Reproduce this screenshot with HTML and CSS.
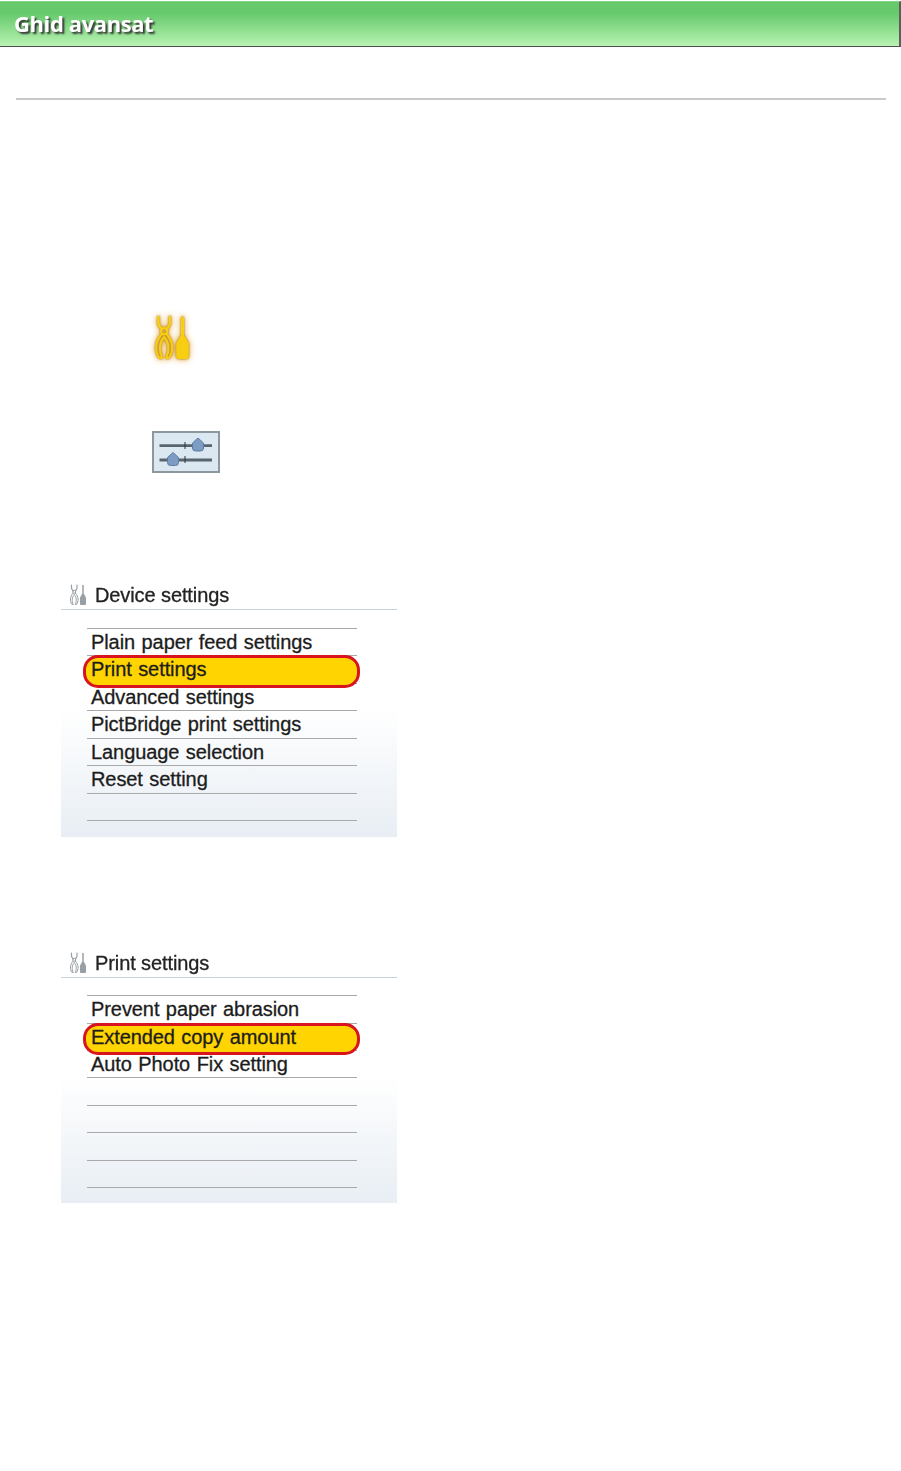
FILE: index.html
```html
<!DOCTYPE html>
<html lang="ro">

<head>
    <meta charset="UTF-8">
    <meta name="viewport" content="width=device-width, initial-scale=1.0">
    <title>Ghid avansat</title>
    <link rel="stylesheet" href="styles.css">
</head>

<body>

    <svg class="defs" width="0" height="0">
        <symbol id="tools" viewBox="2 1 36 44">
            <!-- pliers -->
            <path d="M7 3 L7 9 C7 12 10 13 10 15 M18 3 L18 9 C18 12 15 13 15 15" fill="none" stroke="currentColor" stroke-width="2.400" stroke-linecap="round" stroke-linejoin="round"/>
            <circle cx="12.500" cy="16.500" r="3" fill="none" stroke="currentColor" stroke-width="2.200"/>
            <path d="M10.500 19 C4 26 3 35 8 42 L10.500 42 C7 35 8 27 12.500 22 C17 27 18 35 14.500 42 L17 42 C22 35 21 26 14.500 19" fill="none" stroke="currentColor" stroke-width="2" stroke-linejoin="round"/>
            <!-- screwdriver -->
            <path d="M30 4 V22" fill="none" stroke="currentColor" stroke-width="3" stroke-linecap="round"/>
            <path d="M28 21 H32 L36 28 V41 Q36 43 34 43 H26 Q24 43 24 41 V28 Z" fill="currentColor"/>
        </symbol>
    </svg>

    <div id="pageHeader">
        <h1>Ghid avansat</h1>
    </div>

    <hr class="rule">

    <div class="toolsIcon">
        <svg width="40" height="46"><use href="#tools"/></svg>
    </div>

    <div class="slidersIcon">
        <svg width="68" height="42" viewBox="0 0 68 42">
            <rect x="1" y="1" width="66" height="40" fill="#dbe8f1" stroke="#8d979e" stroke-width="2"/>
            <path d="M7.500 14.700 H60" stroke="#5a646e" stroke-width="2.800"/>
            <path d="M7.500 29 H60" stroke="#5a646e" stroke-width="2.800"/>
            <path d="M33 11 V18 M33 25 V32" stroke="#2c333a" stroke-width="1"/>
            <path d="M40.500 12 L46 7 L51.500 12 V17 Q51.500 20 48.500 20 H43.500 Q40.500 20 40.500 17 Z" fill="#7d9cc4" stroke="#5d7ba3" stroke-width="1"/>
            <path d="M15.500 26.500 L21 21.500 L26.500 26.500 V31.500 Q26.500 34.500 23.500 34.500 H18.500 Q15.500 34.500 15.500 31.500 Z" fill="#7d9cc4" stroke="#5d7ba3" stroke-width="1"/>
        </svg>
    </div>

    <div class="screen firstScreen">
        <div class="screenTitle">
            <svg width="20" height="22"><use href="#tools"/></svg>
            <span>Device settings</span>
        </div>
        <ul class="menu">
            <li>Plain paper feed settings</li>
            <li class="selected"><span>Print settings</span></li>
            <li>Advanced settings</li>
            <li>PictBridge print settings</li>
            <li>Language selection</li>
            <li>Reset setting</li>
            <li></li>
        </ul>
    </div>

    <div class="screen secondScreen">
        <div class="screenTitle">
            <svg width="20" height="22"><use href="#tools"/></svg>
            <span>Print settings</span>
        </div>
        <ul class="menu">
            <li>Prevent paper abrasion</li>
            <li class="selected"><span>Extended copy amount</span></li>
            <li>Auto Photo Fix setting</li>
            <li></li>
            <li></li>
            <li></li>
            <li></li>
        </ul>
    </div>

</body>
</html>
```

FILE: styles.css
```css
body {
    margin: 0;
    min-height: 1471px;
    background-color: #fff;
    font-family: 'Liberation Sans', Arial, sans-serif;
    color: #1c1c1c;
}

.defs {
    position: absolute;
}

#pageHeader {
    box-sizing: border-box;
    width: 901px;
    height: 46px;
    margin-top: 1px;
    padding-left: 14px;
    background: linear-gradient(to bottom, #66c96c 0%, #66c96c 25%, #b8f3b2 100%);
    border-top: 1px solid #82d486;
    border-right: 2px solid #5d5d5d;
    border-bottom: 1px solid #4f4f4f;
}

#pageHeader h1 {
    margin: 0;
    font-family: 'Open Sans', sans-serif;
    font-size: 22px;
    font-weight: 700;
    line-height: 42px;
    letter-spacing: -0.4px;
    color: #fff;
    text-shadow: 2px 2px 2px #333;
    filter: blur(0.3px);
}

.rule {
    width: 870px;
    height: 2px;
    margin: 51px 0 0 16px;
    border: none;
    background-color: #c9c9c9;
}

.toolsIcon {
    height: 46px;
    margin: 215px 0 0 152px;
    color: #f7cf10;
}

.toolsIcon svg {
    display: block;
    filter: drop-shadow(0 0 1px #a8700c) drop-shadow(0 0 3px #e6a93c);
}

.slidersIcon {
    height: 42px;
    margin: 70px 0 0 152px;
}

.slidersIcon svg {
    display: block;
    filter: blur(0.5px);
}

.screen {
    box-sizing: border-box;
    width: 336px;
    margin-left: 61px;
    padding-bottom: 16px;
    background: linear-gradient(to bottom, #fff 0%, #fff 50%, #e8eef4 100%);
}

.firstScreen {
    margin-top: 107px;
}

.secondScreen {
    margin-top: 111px;
    padding-bottom: 15px;
}

.secondScreen .menu {
    margin-top: 17px;
}

.screenTitle {
    display: flex;
    align-items: center;
    gap: 7px;
    height: 29px;
    padding-left: 7px;
    border-bottom: 1px solid #c8d2e2;
    font-size: 20px;
    letter-spacing: -0.1px;
    color: #222;
    -webkit-text-stroke: 0.3px #222;
}

.screenTitle span {
    padding-top: 2px;
    filter: blur(0.3px);
}

.screenTitle svg {
    color: #979fa5;
}

.menu {
    list-style: none;
    width: 270px;
    margin: 18px 0 0 26px;
    padding: 0;
    border-top: 1px solid #a9a9a9;
    font-size: 20px;
    letter-spacing: -0.08px;
    word-spacing: 1px;
    -webkit-text-stroke: 0.3px #1c1c1c;
}

.menu li {
    box-sizing: border-box;
    height: 27.45px;
    padding-left: 4px;
    border-bottom: 1px solid #a9a9a9;
    line-height: 26px;
    white-space: nowrap;
}

/* the red pill sits on the row, behind its text */
.menu .selected {
    position: relative;
    z-index: 0;
}

.menu .selected::before {
    content: "";
    position: absolute;
    top: -1px;
    left: -4px;
    right: -3px;
    bottom: -5px;
    z-index: -1;
    background-color: #ffd400;
    border: 3px solid #d8141e;
    border-radius: 15px;
    filter: blur(0.4px);
}
```
